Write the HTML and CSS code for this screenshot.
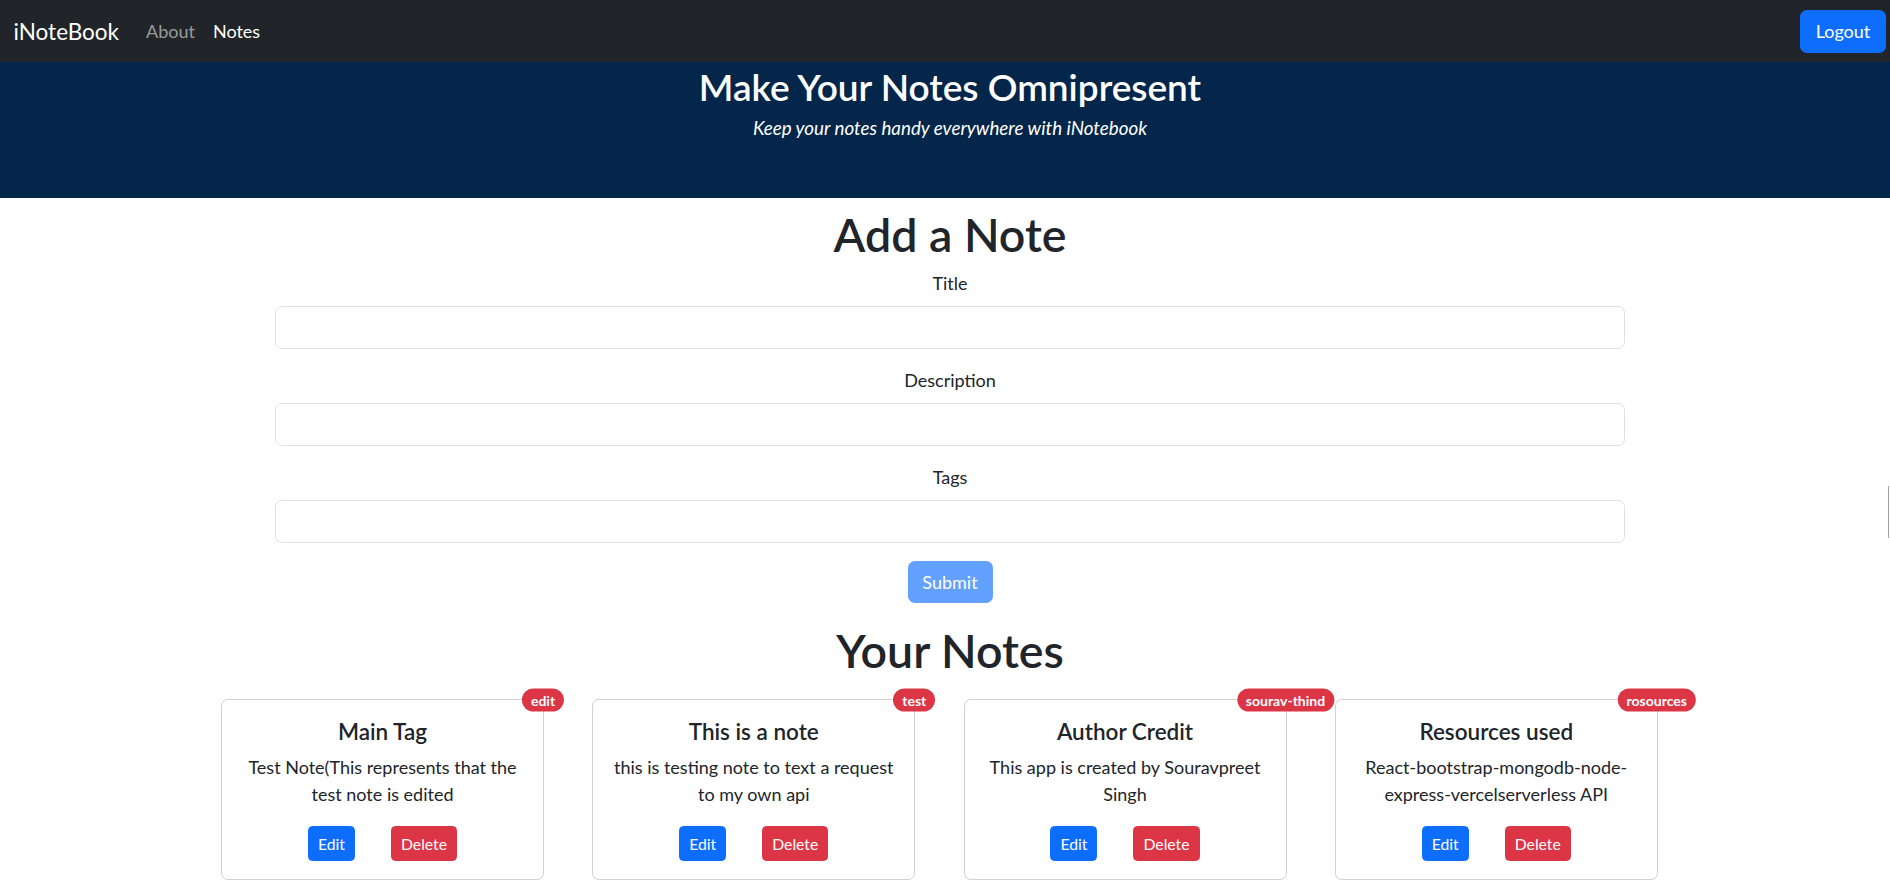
FILE: index.html
```html
<!DOCTYPE html>
<html lang="en">
<head>
<meta charset="utf-8">
<title>iNoteBook</title>
<link rel="stylesheet" href="styles.css">
</head>
<body>
<nav class="navbar">
  <div class="nav-left">
    <a class="brand" href="#">iNoteBook</a>
    <a class="nav-link muted" href="#">About</a>
    <a class="nav-link active" href="#">Notes</a>
  </div>
  <button class="btn btn-primary btn-logout">Logout</button>
</nav>

<header class="hero">
  <h2 class="hero-title">Make Your Notes Omnipresent</h2>
  <p class="hero-sub">Keep your notes handy everywhere with iNotebook</p>
</header>

<main>
  <section class="form-wrap">
    <h1 class="heading add-heading">Add a Note</h1>
    <div class="form-group">
      <label class="form-label" for="title">Title</label>
      <input class="form-control" id="title" type="text">
    </div>
    <div class="form-group">
      <label class="form-label" for="desc">Description</label>
      <input class="form-control" id="desc" type="text">
    </div>
    <div class="form-group">
      <label class="form-label" for="tags">Tags</label>
      <input class="form-control" id="tags" type="text">
    </div>
    <div class="submit-row">
      <button class="btn btn-primary btn-disabled" disabled>Submit</button>
    </div>
  </section>

  <h1 class="heading notes-heading">Your Notes</h1>

  <section class="notes">
    <div class="note-col">
      <div class="card">
        <span class="badge">edit</span>
        <h5 class="card-title">Main Tag</h5>
        <p class="card-text">Test Note(This represents that the test note is edited</p>
        <div class="card-actions">
          <button class="btn btn-sm btn-primary">Edit</button>
          <button class="btn btn-sm btn-danger">Delete</button>
        </div>
      </div>
    </div>
    <div class="note-col">
      <div class="card">
        <span class="badge">test</span>
        <h5 class="card-title">This is a note</h5>
        <p class="card-text">this is testing note to text a request to my own api</p>
        <div class="card-actions">
          <button class="btn btn-sm btn-primary">Edit</button>
          <button class="btn btn-sm btn-danger">Delete</button>
        </div>
      </div>
    </div>
    <div class="note-col">
      <div class="card">
        <span class="badge">sourav-thind</span>
        <h5 class="card-title">Author Credit</h5>
        <p class="card-text">This app is created by Souravpreet Singh</p>
        <div class="card-actions">
          <button class="btn btn-sm btn-primary">Edit</button>
          <button class="btn btn-sm btn-danger">Delete</button>
        </div>
      </div>
    </div>
    <div class="note-col">
      <div class="card">
        <span class="badge">rosources</span>
        <h5 class="card-title">Resources used</h5>
        <p class="card-text">React-bootstrap-mongodb-node-express-vercelserverless API</p>
        <div class="card-actions">
          <button class="btn btn-sm btn-primary">Edit</button>
          <button class="btn btn-sm btn-danger">Delete</button>
        </div>
      </div>
    </div>
  </section>
</main>
<div class="edge-mark"></div>
</body>
</html>
```

FILE: styles.css
```css
html {
  overflow: hidden;
}
* {
  box-sizing: border-box;
}
body {
  margin: 0;
  width: 1900px;
  font-family: Lato, "Open Sans", sans-serif;
  font-size: 18px;
  line-height: 1.5;
  color: #212529;
  background: #fff;
}
a {
  text-decoration: none;
}

/* navbar */
.navbar {
  height: 62px;
  background: #212529;
  display: flex;
  align-items: center;
  justify-content: space-between;
  padding: 0 14px 0 13.5px;
}
.nav-left {
  display: flex;
  align-items: center;
}
.brand {
  color: #fff;
  font-size: 22.5px;
  line-height: 1.2;
  margin-right: 18px;
}
.nav-link {
  font-size: 18px;
  padding: 9px;
}
.nav-link.muted {
  color: rgba(255, 255, 255, 0.55);
}
.nav-link.active {
  color: #fff;
}

/* buttons */
.btn {
  font-family: inherit;
  font-size: 18px;
  line-height: 1.5;
  border: 1px solid transparent;
  border-radius: 6.75px;
  padding: 6px 13.5px;
  color: #fff;
  cursor: pointer;
}
.btn-primary {
  background: #0d6efd;
  border-color: #0d6efd;
}
.btn-danger {
  background: #dc3545;
  border-color: #dc3545;
}
.btn-logout {
  height: 43px;
  width: 86px;
  padding: 0;
}
.btn-disabled {
  background: #62a1fe;
  border-color: #62a1fe;
  width: 85px;
  height: 42px;
  padding: 0;
}
.btn-sm {
  font-size: 15.75px;
  padding: 0 9px;
  height: 35px;
  border-radius: 4.5px;
}

/* hero */
.hero {
  height: 136px;
  background: #03264a;
  color: #fff;
  text-align: center;
  padding-top: 3px;
}
.hero-title {
  margin: 0 0 6px;
  font-size: 37px;
  font-weight: 600;
  line-height: 43px;
}
.hero-sub {
  margin: 0;
  font-size: 18.8px;
  line-height: 27px;
  font-style: italic;
}

/* form */
.form-wrap {
  width: 1350px;
  margin: 0 auto;
}
.heading {
  margin: 0;
  font-size: 46.5px;
  font-weight: 600;
  line-height: 54px;
  text-align: center;
}
.add-heading {
  margin-top: 9px;
  margin-bottom: 9px;
}
.form-group {
  margin-bottom: 18px;
}
.form-label {
  display: block;
  text-align: center;
  margin-bottom: 9px;
}
.form-control {
  display: block;
  width: 100%;
  height: 43px;
  border: 1px solid #dee2e6;
  border-radius: 6.75px;
  font-family: inherit;
  font-size: 18px;
  padding: 6px 13.5px;
}
.submit-row {
  display: flex;
  justify-content: center;
}
.notes-heading {
  margin-top: 20px;
}

/* notes */
.notes {
  width: 1485px;
  margin: 22px auto 0;
  display: grid;
  grid-template-columns: repeat(4, 371.25px);
}
.note-col {
  padding-left: 13.5px;
}
.card {
  position: relative;
  width: 323px;
  border: 1px solid rgba(0, 0, 0, 0.175);
  border-radius: 6.75px;
  padding: 18px;
  text-align: center;
}
.badge {
  position: absolute;
  top: 0;
  left: 100%;
  transform: translate(-50%, -50%);
  background: #dc3545;
  color: #fff;
  font-size: 14px;
  font-weight: 700;
  line-height: 1;
  padding: 4.5px 9px;
  border-radius: 50rem;
  white-space: nowrap;
}
.card-title {
  margin: 0 0 9px;
  font-size: 22.5px;
  font-weight: 600;
  line-height: 1.2;
}
.card-text {
  margin: 0 0 18px;
}
.card-actions {
  display: flex;
  justify-content: center;
  gap: 36px;
}

.edge-mark {
  position: fixed;
  left: 1888px;
  top: 486px;
  width: 1px;
  height: 52px;
  background: #a0a0a0;
}
```
